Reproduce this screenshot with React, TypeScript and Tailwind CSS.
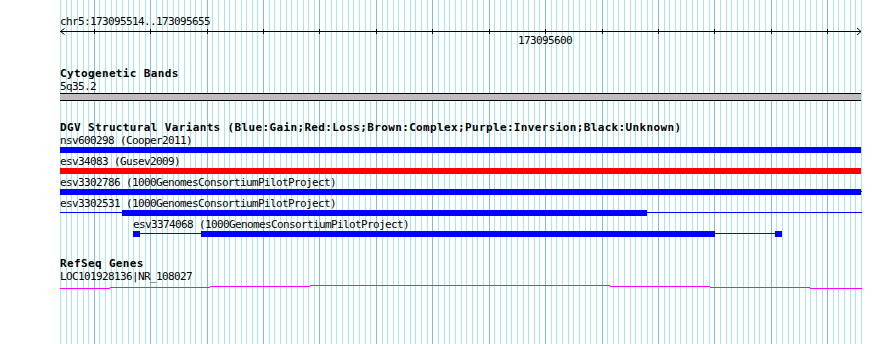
import React from 'react';

// region chr5:173095514..173095655 drawn over 801px starting at x=60
const X0 = 60;
const W = 801;
const N = 142;

const gx = (i: number) => Math.round(X0 + (i * W) / N);

const mono = "font-['DejaVu_Sans_Mono',monospace]";

function Grid() {
  const lines = [];
  for (let i = 0; i <= N; i++) {
    const major = (i - 6) % 10 === 0;
    lines.push(
      <line
        key={i}
        x1={gx(i) + 0.5}
        x2={gx(i) + 0.5}
        y1={0}
        y2={344}
        stroke={major ? '#7fbde9' : '#a6e8ee'}
        strokeWidth={1}
      />
    );
  }
  return (
    <svg className="absolute inset-0" width={890} height={344} shapeRendering="crispEdges">
      {lines}
    </svg>
  );
}

function Ruler() {
  const ticks = [];
  for (let i = 6; i <= N; i += 10) {
    const x = gx(i) - X0 + 0.5;
    ticks.push(<line key={i} x1={x} x2={x} y1={1} y2={6} stroke="#000" />);
  }
  return (
    <svg width={W + 1} height={6} className="block overflow-visible">
      <line x1={0} x2={W} y1={3.5} y2={3.5} stroke="#000" shapeRendering="crispEdges" />
      <polyline points="4.5,0.5 0.5,3.5 4.5,6.5" fill="none" stroke="#000" />
      <polyline points={`${W - 4},0 ${W},3.5 ${W - 4},7`} fill="none" stroke="#000" />
      <g shapeRendering="crispEdges">{ticks}</g>
    </svg>
  );
}

function Label({ text, bold }: { text: string; bold?: boolean }) {
  return bold ? (
    <div className={`${mono} h-[12px] whitespace-pre text-[11px] font-bold leading-[12px] tracking-[0.36px] text-black`}>
      {text}
    </div>
  ) : (
    <div className={`${mono} h-[13px] whitespace-pre text-[11px] leading-[13px] tracking-[-0.62px] text-black`}>
      {text}
    </div>
  );
}

type Seg = { from: number; to: number; kind: 'thick' | 'thin' };

function Feature({ segs, color }: { segs: Seg[]; color: string }) {
  return (
    <svg width={W + 2} height={6} className="block" shapeRendering="crispEdges">
      {segs.map((s, i) =>
        s.kind === 'thick' ? (
          <rect key={i} x={s.from - X0} y={0} width={s.to - s.from} height={6} fill={color} />
        ) : (
          <rect key={i} x={s.from - X0} y={2} width={s.to - s.from} height={1} fill={color} />
        )
      )}
    </svg>
  );
}

const geneSteps: [number, number, number][] = [
  [60, 110, 5],
  [110, 210, 4],
  [210, 310, 3],
  [310, 410, 2],
  [410, 510, 2],
  [510, 610, 2],
  [610, 710, 3],
  [710, 810, 4],
  [810, 862, 5],
];

export default function App() {
  return (
    <div className="relative h-[344px] w-[890px] overflow-hidden bg-white">
      <Grid />
      <div className="relative flex flex-col pl-[60px] pt-[15px]">
        <Label text="chr5:173095514..173095655" />
        <Ruler />
        <div className="ml-[458px]">
          <Label text="173095600" />
        </div>

        <div className="mt-[21px]">
          <Label text="Cytogenetic Bands" bold />
          <Label text="5q35.2" />
          <div className="h-[8px] w-[801px] border-y border-black bg-[#bfbdbf]" />
        </div>

        <div className="mt-[21px]">
          <Label text="DGV Structural Variants (Blue:Gain;Red:Loss;Brown:Complex;Purple:Inversion;Black:Unknown)" bold />
          <Label text="nsv600298 (Cooper2011)" />
          <Feature color="#0000ff" segs={[{ from: 60, to: 861, kind: 'thick' }]} />
          <div className="mt-[2px]">
            <Label text="esv34083 (Gusev2009)" />
          </div>
          <Feature color="#ff0000" segs={[{ from: 60, to: 861, kind: 'thick' }]} />
          <div className="mt-[2px]">
            <Label text="esv3302786 (1000GenomesConsortiumPilotProject)" />
          </div>
          <Feature
            color="#0000ff"
            segs={[
              { from: 60, to: 861, kind: 'thick' },
              { from: 861, to: 862, kind: 'thin' },
            ]}
          />
          <div className="mt-[2px]">
            <Label text="esv3302531 (1000GenomesConsortiumPilotProject)" />
          </div>
          <Feature
            color="#0000ff"
            segs={[
              { from: 60, to: 862, kind: 'thin' },
              { from: 122, to: 647, kind: 'thick' },
            ]}
          />
          <div className="mt-[2px] pl-[73px]">
            <Label text="esv3374068 (1000GenomesConsortiumPilotProject)" />
          </div>
          <Feature
            color="#0000ff"
            segs={[
              { from: 133, to: 140, kind: 'thick' },
              { from: 140, to: 201, kind: 'thin' },
              { from: 201, to: 715, kind: 'thick' },
              { from: 715, to: 775, kind: 'thin' },
              { from: 775, to: 782, kind: 'thick' },
            ]}
          />
        </div>

        <div className="mt-[21px]">
          <Label text="RefSeq Genes" bold />
          <Label text="LOC101928136|NR_108027" />
          <svg width={W + 2} height={8} className="block" shapeRendering="crispEdges">
            {geneSteps.map(([a, b, y], i) => (
              <rect key={i} x={a - X0} y={y} width={b - a} height={1} fill="#ff00ff" />
            ))}
          </svg>
        </div>
      </div>
    </div>
  );
}
